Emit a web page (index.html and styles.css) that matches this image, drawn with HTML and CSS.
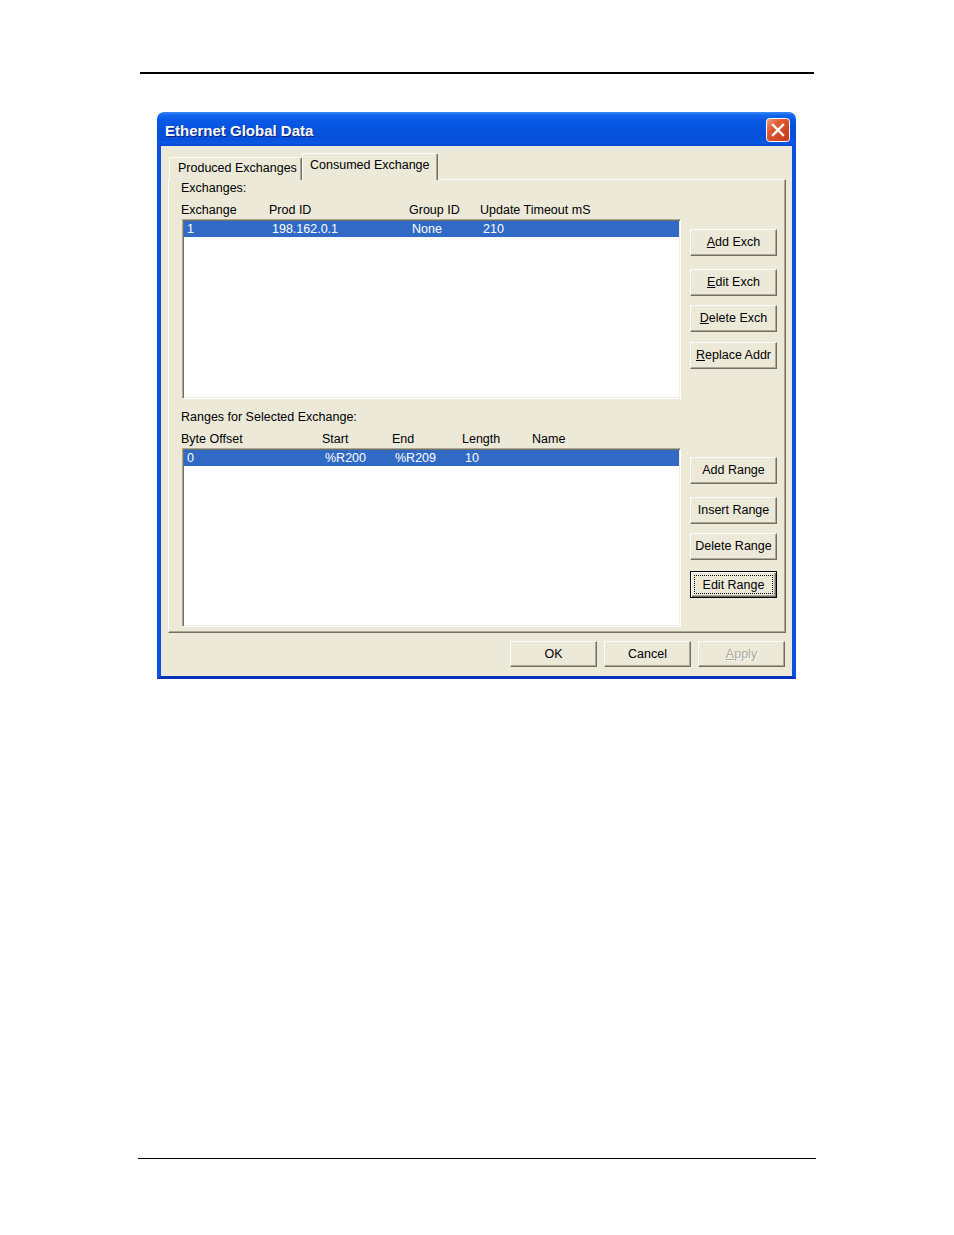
FILE: index.html
```html
<!DOCTYPE html>
<html>
<head>
<meta charset="utf-8">
<title>Ethernet Global Data</title>
<link rel="stylesheet" href="styles.css">
</head>
<body>
<div class="page">
  <div class="rule-top"></div>
  <div class="window">
    <div class="titlebar">
      <span class="title">Ethernet Global Data</span>
      <span class="close">
        <svg width="24" height="24" viewBox="0 0 24 24">
          <defs>
            <linearGradient id="cg" x1="0" y1="0" x2="1" y2="1">
              <stop offset="0" stop-color="#F0A088"/>
              <stop offset="0.35" stop-color="#E05A33"/>
              <stop offset="1" stop-color="#C0361A"/>
            </linearGradient>
          </defs>
          <rect x="0.5" y="0.5" width="23" height="23" rx="3" fill="url(#cg)" stroke="#fff"/>
          <path d="M7 7 L17 17 M17 7 L7 17" stroke="#fff" stroke-width="2.4" stroke-linecap="square"/>
        </svg>
      </span>
    </div>
    <div class="client">
      <div class="tabs">
        <div class="tab">Produced Exchanges</div>
        <div class="tab active">Consumed Exchange</div>
      </div>
      <div class="panel">
        <div class="lbl">Exchanges:</div>
        <div class="hdr cols-ex-h">
          <span>Exchange</span><span>Prod ID</span><span>Group ID</span><span>Update Timeout mS</span>
        </div>
        <div class="listrow">
          <div class="list list-ex">
            <div class="row sel cols-ex-r">
              <span>1</span><span>198.162.0.1</span><span>None</span><span>210</span>
            </div>
          </div>
          <div class="btns">
            <div class="btn mt10"><u>A</u>dd Exch</div>
            <div class="btn mt13"><u>E</u>dit Exch</div>
            <div class="btn mt9"><u>D</u>elete Exch</div>
            <div class="btn mt10"><u>R</u>eplace Addr</div>
          </div>
        </div>
        <div class="lbl lbl2">Ranges for Selected Exchange:</div>
        <div class="hdr cols-rg-h">
          <span>Byte Offset</span><span>Start</span><span>End</span><span>Length</span><span>Name</span>
        </div>
        <div class="listrow">
          <div class="list list-rg">
            <div class="row sel cols-rg-r">
              <span>0</span><span>%R200</span><span>%R209</span><span>10</span><span></span>
            </div>
          </div>
          <div class="btns">
            <div class="btn mt9">Add Range</div>
            <div class="btn mt13">Insert Range</div>
            <div class="btn mt9">Delete Range</div>
            <div class="btn default mt11"><span class="focus">Edit Range</span></div>
          </div>
        </div>
      </div>
      <div class="footer">
        <div class="btn wide">OK</div>
        <div class="btn wide">Cancel</div>
        <div class="btn wide disabled"><u>A</u>pply</div>
      </div>
    </div>
  </div>
  <div class="rule-bottom"></div>
</div>
</body>
</html>
```

FILE: styles.css
```css
html, body {
  margin: 0;
  padding: 0;
  background: #ffffff;
}

.page {
  width: 954px;
  height: 1235px;
  overflow: hidden;
  font-family: "Liberation Sans", Arial, sans-serif;
  font-size: 12.5px;
  color: #000;
}

.rule-top {
  margin: 72px 0 0 140px;
  width: 674px;
  height: 2px;
  background: #000;
}

.rule-bottom {
  margin: 479px 0 0 138px;
  width: 678px;
  height: 1px;
  background: #000;
}

.window {
  margin: 38px 0 0 157px;
  width: 639px;
}

.titlebar {
  height: 34px;
  box-sizing: border-box;
  border-radius: 7px 7px 0 0;
  background: linear-gradient(#3A8CF8 0px, #1467EE 3px, #0A5AE6 8px, #0553DE 16px, #0650DA 26px, #0A58E2 31px, #0848D0 34px);
  display: flex;
  align-items: center;
  justify-content: space-between;
  padding: 0 6px 0 8px;
}

.title {
  color: #fff;
  font-weight: bold;
  font-size: 15px;
  text-shadow: 1px 1px 0 #0A1E7A;
  padding-top: 2px;
}

.close {
  display: block;
  width: 24px;
  height: 24px;
  margin-top: 1px;
}

.close svg {
  display: block;
}

.client {
  background: #ECE9D8;
  border-left: 4px solid #0B50DE;
  border-right: 4px solid #0B50DE;
  border-bottom: 3px solid #0832B8;
  height: 530px;
  box-sizing: content-box;
}

.tabs {
  display: flex;
  align-items: flex-end;
  margin-left: 8px;
  padding-top: 8px;
  height: 26px;
  position: relative;
  z-index: 1;
  margin-bottom: -1px;
}

.tab {
  height: 23px;
  box-sizing: border-box;
  padding: 3px 0 0 8px;
  width: 133px;
  border-top: 1px solid #fff;
  border-left: 1px solid #fff;
  border-right: 1px solid #716F64;
  box-shadow: inset -1px 0 #ACA899;
  border-radius: 2px 2px 0 0;
  background: #ECE9D8;
  white-space: nowrap;
}

.tab.active {
  height: 27px;
  width: 136px;
  padding: 4px 0 0 7px;
  margin-left: 0;
}

.panel {
  margin-left: 7px;
  width: 618px;
  height: 454px;
  box-sizing: border-box;
  border: 1px solid;
  border-color: #fff #716F64 #716F64 #fff;
  box-shadow: inset -1px -1px #ACA899;
  padding: 1px 0 0 12px;
}

.lbl {
  height: 15px;
  line-height: 15px;
  white-space: nowrap;
}

.lbl2 {
  margin-top: 11px;
}

.hdr {
  margin-top: 7px;
  height: 14px;
  line-height: 14px;
  display: grid;
  white-space: nowrap;
}

.cols-ex-h { grid-template-columns: 88px 140px 71px auto; }
.cols-ex-r { grid-template-columns: 85px 140px 71px auto; }
.cols-rg-h { grid-template-columns: 141px 70px 70px 70px auto; }
.cols-rg-r { grid-template-columns: 138px 70px 70px 70px auto; }

.listrow {
  margin-top: 2px;
  display: flex;
  align-items: flex-start;
}

.list {
  margin-left: 1px;
  width: 499px;
  box-sizing: border-box;
  background: #fff;
  border: 1px solid;
  border-color: #ACA899 #fff #fff #ACA899;
  box-shadow: inset 1px 1px #716F64, inset -1px -1px #F1EFE2;
  padding: 1px;
}

.list-ex { height: 180px; }
.list-rg { height: 179px; }

.row {
  display: grid;
  height: 16px;
  line-height: 16px;
  padding-left: 3px;
  white-space: nowrap;
}

.row.sel {
  background: #316AC5;
  color: #fff;
}

.btns {
  margin-left: 9px;
  display: flex;
  flex-direction: column;
  width: 87px;
}

.btn {
  height: 27px;
  box-sizing: border-box;
  border: 1px solid;
  border-color: #fff #716F64 #716F64 #fff;
  box-shadow: inset -1px -1px #ACA899;
  background: #ECE9D8;
  display: flex;
  align-items: center;
  justify-content: center;
  white-space: nowrap;
  padding-bottom: 1px;
}

.mt9 { margin-top: 9px; }
.mt10 { margin-top: 10px; }
.mt11 { margin-top: 11px; }
.mt13 { margin-top: 13px; }

.btn.default {
  border-color: #000;
  box-shadow: inset 1px 1px #fff, inset -1px -1px #716F64, inset -2px -2px #ACA899;
  padding: 3px;
}

.focus {
  display: flex;
  align-items: center;
  justify-content: center;
  width: 100%;
  height: 100%;
  box-sizing: border-box;
  border: 1px dotted #000;
}

.footer {
  margin-top: 8px;
  display: flex;
  justify-content: flex-end;
  gap: 7px;
  padding-right: 7px;
}

.btn.wide {
  width: 87px;
  height: 26px;
}

.btn.disabled {
  color: #ACA899;
  text-shadow: 1px 1px 0 #fff;
}
```
